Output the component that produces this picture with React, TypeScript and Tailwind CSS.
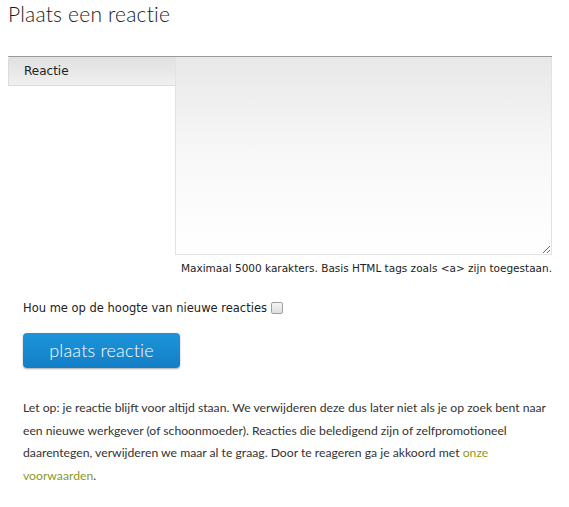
export default function App() {
  return (
    <div className="bg-white w-[569px] h-[507px] overflow-hidden text-[#333]">
      <h2 className="pl-[8px] pt-[1px] text-[21px] leading-[26px] font-light text-[#1a1a1a] font-['Lato','Open_Sans',sans-serif] tracking-[0.2px]">
        Plaats een reactie
      </h2>

      <div className="mt-[29px] ml-[8px] w-[544px]">
        <div className="flex border-t border-[#9a9a9a]">
          <div className="w-[167px] shrink-0">
            <div className="h-[29px] flex items-center pl-[15px] rounded-tl-[3px] border-l border-b border-[#dcdcdc] bg-gradient-to-b from-[#e0e0e0] to-[#f0f0f0] text-[12px] text-[#222] font-['DejaVu_Sans',sans-serif]">
              Reactie
            </div>
          </div>
          <textarea
            className="flex-1 h-[198px] border-x border-b border-[#e2e2e2] bg-gradient-to-b from-[#e8e8e8] via-[#f8f8f8] to-white outline-none resize-y"
          />
        </div>
        <p className="mt-[6px] text-right text-[10.5px] leading-[14px] text-[#222] font-['DejaVu_Sans',sans-serif]">
          Maximaal 5000 karakters. Basis HTML tags zoals &lt;a&gt; zijn toegestaan.
        </p>
      </div>

      <label className="flex items-center gap-[4px] ml-[23px] mt-[26px] text-[11.5px] leading-[14px] text-[#222] font-['DejaVu_Sans',sans-serif]">
        Hou me op de hoogte van nieuwe reacties
        <input type="checkbox" className="w-[12px] h-[12px] appearance-none rounded-[2px] border border-[#a0a0a0] bg-gradient-to-b from-[#f4f4f4] to-[#dedede]" />
      </label>

      <button className="ml-[23px] mt-[18px] w-[157px] h-[35px] rounded-[4px] bg-gradient-to-b from-[#1d95da] to-[#137ec6] shadow-[0_1px_2px_rgba(0,0,0,0.35)] text-white text-[18px] font-light font-['Lato','Open_Sans',sans-serif] tracking-[0.2px]">
        plaats reactie
      </button>

      <p className="ml-[23px] mt-[29px] w-[536px] text-[12.2px] leading-[22.5px] text-[#333] font-['Lato','Open_Sans',sans-serif]">
        Let op: je reactie blijft voor altijd staan. We verwijderen deze dus later niet als je op zoek bent naar een nieuwe werkgever (of schoonmoeder). Reacties die beledigend zijn of zelfpromotioneel daarentegen, verwijderen we maar al te graag. Door te reageren ga je akkoord met{' '}
        <a className="text-[#8c9a1c]">onze voorwaarden</a>.
      </p>
    </div>
  )
}
